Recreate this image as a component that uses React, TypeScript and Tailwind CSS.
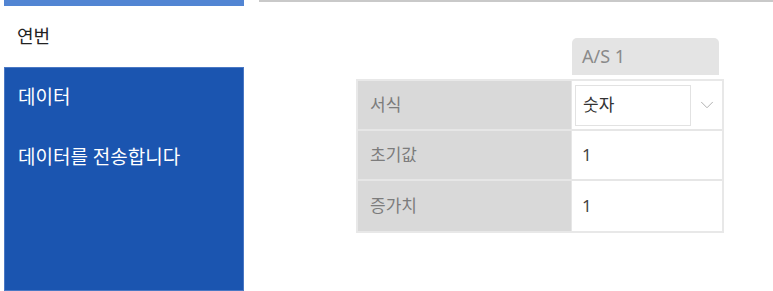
import { ChevronDown } from 'lucide-react';

const font = { fontFamily: '"Noto Sans", "Noto Sans CJK KR", sans-serif' };

function Row({ label, children, last }: { label: string; children: React.ReactNode; last?: boolean }) {
  return (
    <div className={`grid grid-cols-[213px_1fr] h-[50px] ${last ? '' : 'border-b-2 border-[#e6e6e6]'}`}>
      <div className="flex items-center bg-[#d9d9d9] pl-[12px] text-[17px] text-[#7c7c7c]">{label}</div>
      <div className="flex items-center bg-white border-l border-[#e6e6e6]">{children}</div>
    </div>
  );
}

export default function App() {
  return (
    <div className="flex h-[291px] w-[773px] overflow-hidden bg-white" style={font}>
      <div className="ml-1 flex w-[240px] flex-col">
        <div className="h-[6px] bg-[#5285d3]" />
        <div className="flex h-[61px] items-center px-[13px] text-[18px] text-[#222]">연번</div>
        <div className="flex-1 border border-[#4a78c4] bg-[#1b55b0] text-[19px] text-white">
          <div className="flex h-[59px] items-center px-[13px]">데이터</div>
          <div className="flex h-[60px] items-center px-[13px]">데이터를 전송합니다</div>
        </div>
      </div>

      <div className="ml-[15px] flex flex-1 flex-col">
        <div className="h-[2px] bg-[#c9c9c9]" />
        <div className="ml-[97px] mt-[36px] w-[368px]">
          <div className="ml-[216px] flex h-[37px] w-[147px] items-center rounded-t-[5px] bg-[#e4e4e4] pl-[10px] text-[18px] text-[#8a8a8a]">
            A/S 1
          </div>
          <div className="mt-[4px] border-2 border-[#e8e8e8]">
            <Row label="서식">
              <div className="flex w-full items-center">
                <div className="ml-[3px] flex h-[41px] w-[116px] items-center border border-[#e2e2e2] pl-[7px] text-[17px] text-[#333]">
                  숫자
                </div>
                <ChevronDown className="ml-[5px] h-[22px] w-[22px] text-[#aaaaaa]" strokeWidth={1} />
              </div>
            </Row>
            <Row label="초기값">
              <span className="pl-[10px] text-[17px] text-[#444]">1</span>
            </Row>
            <Row label="증가치" last>
              <span className="pl-[10px] text-[17px] text-[#444]">1</span>
            </Row>
          </div>
        </div>
      </div>
    </div>
  );
}
